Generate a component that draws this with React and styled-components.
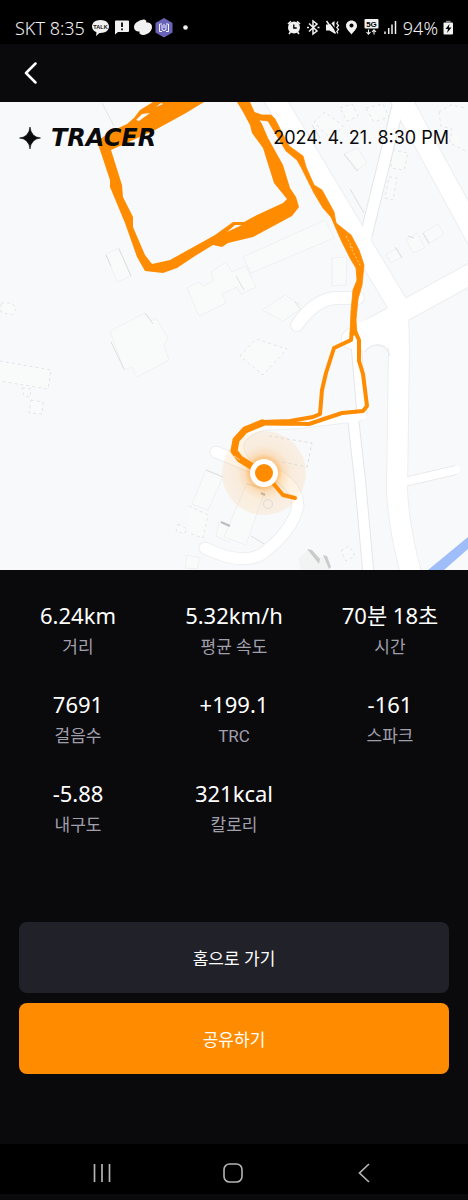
import React from "react";
import styled, { createGlobalStyle } from "styled-components";

const stats = [
  { value: "6.24km", label: "거리" },
  { value: "5.32km/h", label: "평균 속도" },
  { value: "70분 18초", label: "시간" },
  { value: "7691", label: "걸음수" },
  { value: "+199.1", label: "TRC" },
  { value: "-161", label: "스파크" },
  { value: "-5.88", label: "내구도" },
  { value: "321kcal", label: "칼로리" },
];

// w is the road width, the edge line is drawn underneath
const roads = [
  { d: "M268 88 L398 305 L399 350 L397 490 Q399 532 413 580", w: 20 },
  { d: "M400 98 L366 236", w: 11, dashed: true },
  { d: "M396 90 L476 237", w: 20 },
  { d: "M480 269 L400 313 L352 339", w: 20 },
  { d: "M355 332 L362 415", w: 9, dashed: true },
  { d: "M353 418 L360 480 L369 580", w: 10, dashed: true },
  { d: "M400 483 L456 470", w: 8, dashed: true },
  { d: "M358 298 H335 Q314 300 297 325", w: 12 },
  { d: "M358 417 L300 424 L262 426 Q240 434 239 446 Q240 462 262 473", w: 8 },
  { d: "M216 452 L250 466 Q297 476 298 506 Q292 532 262 554 Q242 566 205 548", w: 11 },
];

const buildings = [
  "M106 254 L119 248 L131 276 L117 282 Z",
  "M187 288 L199 282 L203 286 L214 281 L211 272 L226 262 L232 272 L246 266 L256 287 L241 294 L237 287 L222 294 L226 303 L199 316 Z",
  "M110 331 L145 313 L151 321 L156 318 L168 338 L164 345 L169 360 L137 377 L132 367 L124 370 Z",
  "M243 257 L325 220 L334 238 L251 273 Z",
  "M332 258 L347 257 L346 285 L332 286 Z",
  "M262 310 L285 295 L304 307 L283 321 Z",
  "M344 154 L358 148 L367 163 L356 171 Z",
  "M386 255 L397 248 L402 257 L391 263 Z",
  "M406 240 L417 233 L425 248 L413 253 Z",
  "M423 233 L438 224 L444 234 L430 243 Z",
  "M206 470 L223 477 L208 510 L192 504 Z",
  "M219 522 L233 529 L229 542 L216 536 Z",
  "M247 483 L265 490 L246 545 L224 537 Z",
  "M187 555 L200 558 L197 569 L185 568 Z",
];

const dashedBuildings = [
  "M0 361 L51 370 L48 389 L0 381",
  "M22 388 L31 389 L30 397 L24 396 Z",
  "M31 400 L43 402 L42 414 L29 413 Z",
  "M1 303 L12 303 L16 309 L12 315 L1 312 Z",
  "M189 506 L208 515 L203 538 L189 533 M178 524 L187 529 L184 534 L176 531 Z",
  "M240 356 L256 339 L287 349 L263 375 Z",
  "M314 122 L325 112 L343 126 L331 139 Z",
  "M340 108 L352 104 L358 116 L347 121 Z",
  "M366 108 L383 104 L389 117 L374 122 Z",
  "M392 150 L408 153 L404 170 L391 168 Z",
  "M389 177 L397 178 L393 200 L385 198 Z",
  "M439 112 L451 105 L466 108 M439 112 L441 126 L452 129 L450 143 L466 151",
  "M341 551 L349 546 L355 556 L346 561 Z",
];

const App = () => {
  return (
    <>
      <GlobalStyle />
      <Screen>
        <StatusBar>
          <StatusGroup>
            <StatusText>SKT 8:35</StatusText>
            <NotificationIcons />
          </StatusGroup>
          <StatusGroup>
            <DeviceIcons />
            <StatusText>94%</StatusText>
            <BatteryIcon />
          </StatusGroup>
        </StatusBar>

        <Header>
          <BackButton type="button" aria-label="뒤로">
            <svg width="14" height="22" viewBox="0 0 14 22">
              <path d="M11.5 1.5 L2 11 L11.5 20.5" fill="none" stroke="#fff" strokeWidth="2.5" strokeLinecap="round" strokeLinejoin="round" />
            </svg>
          </BackButton>
        </Header>

        <main>
          <MapArea>
            <RouteMap />
            <MapCaption>
              <Brand>
                <svg width="22" height="24" viewBox="0 0 22 24">
                  <path d="M11 1 Q12 11 21.5 12 Q12 13 11 23 Q10 13 .5 12 Q10 11 11 1 Z" fill="#0a0a0c" stroke="#0a0a0c" strokeWidth="0.6" />
                </svg>
                <BrandName>TRACER</BrandName>
              </Brand>
              <RecordedAt>2024. 4. 21. 8:30 PM</RecordedAt>
            </MapCaption>
          </MapArea>

          <StatList>
            {stats.map((stat) => (
              <Stat key={stat.label}>
                <StatLabel>{stat.label}</StatLabel>
                <StatValue>{stat.value}</StatValue>
              </Stat>
            ))}
          </StatList>
        </main>

        <Actions>
          <ActionButton type="button">홈으로 가기</ActionButton>
          <ActionButton type="button" $primary>
            공유하기
          </ActionButton>
        </Actions>

        <SystemNav aria-label="시스템">
          <NavButton type="button" aria-label="최근 앱">
            <svg width="20" height="20" viewBox="0 0 20 20">
              <path d="M2.5 1 V19 M10 1 V19 M17.5 1 V19" stroke="#b4b4b4" strokeWidth="1.7" />
            </svg>
          </NavButton>
          <NavButton type="button" aria-label="홈">
            <svg width="20" height="20" viewBox="0 0 20 20">
              <rect x="1" y="1" width="18" height="18" rx="5.5" fill="none" stroke="#b4b4b4" strokeWidth="1.6" />
            </svg>
          </NavButton>
          <NavButton type="button" aria-label="뒤로 가기">
            <svg width="20" height="20" viewBox="0 0 20 20">
              <path d="M15 1 L5.5 10 L15 19" fill="none" stroke="#b4b4b4" strokeWidth="1.7" />
            </svg>
          </NavButton>
        </SystemNav>
      </Screen>
    </>
  );
};

export default App;

const NotificationIcons = () => (
  <svg width="98" height="22" viewBox="90 17 98 22" aria-hidden="true">
    <path d="M100.500 20 C105.500 20 109 22.800 109 26.500 C109 30.200 105.500 33 100.500 33 L99.500 33 L96 36 L96.500 32.300 C93.800 31.200 92 29 92 26.500 C92 22.800 95.500 20 100.500 20 Z" fill="#f2f2f2" />
    <text x="100.500" y="28.500" textAnchor="middle" fontFamily="Liberation Sans" fontSize="5.5" fontWeight="700" fill="#111">
      TALK
    </text>
    <path d="M116 20.500 H128 Q129 20.500 129 21.500 V31 Q129 32 128 32 H118 L115 34.500 V21.500 Q115 20.500 116 20.500 Z" fill="#f2f2f2" />
    <path d="M122 22.500 V27 M122 28.500 V30.300" stroke="#000" strokeWidth="1.800" />
    <path d="M143.500 19.500 C138 20.500 134 23.500 134 27 C134 29.500 135.500 31 138 31.500 L139.500 31.500 L139.500 33.500 Q142 35.500 144 35 C149 34 152 30.500 152 27 C152 24.500 150.500 23 148 22.500 L146.500 22.500 L146 20.500 Q145 19.300 143.500 19.500 Z" fill="#f2f2f2" />
    <path d="M164 18 L172.500 23 V32.500 L164 37.500 L155.500 32.500 V23 Z" fill="#6a64b8" />
    <path d="M162 24 H159.500 V31.500 H162 M166 24 H168.500 V31.500 H166 M162 25 V29 Q162 30.500 164 30.500 Q166 30.500 166 29 V25 M164 24 V28" stroke="#f4f2ff" strokeWidth="1" fill="none" />
    <circle cx="185.500" cy="27.500" r="2.300" fill="#f2f2f2" />
  </svg>
);

const DeviceIcons = () => (
  <svg width="112" height="22" viewBox="288 17 112 22" aria-hidden="true">
    {/* alarm */}
    <circle cx="296" cy="27.500" r="6" fill="#f2f2f2" />
    <path d="M290 24 L293 21.300 M302 24 L299 21.300 M292.500 32 L291 34 M299.500 32 L301 34" stroke="#f2f2f2" strokeWidth="1.600" />
    <path d="M295.800 24.500 V28 H298.700" stroke="#000" strokeWidth="1.300" fill="none" />
    {/* bluetooth */}
    <path d="M311 23.500 L319 31 L315 34 V21 L319 24 L311 31.500 M309 27.500 H311 M319.500 27.500 H321.500" stroke="#f2f2f2" strokeWidth="1.500" fill="none" />
    {/* muted, vibrating */}
    <path d="M328 24.500 H331.500 L336.500 21 V33.500 L331.500 30.500 H328 Z" fill="#f2f2f2" />
    <path d="M330.500 20.500 L339 32" stroke="#000" strokeWidth="1.300" />
    <path d="M328.500 21 L337.500 33.500" stroke="#f2f2f2" strokeWidth="1.400" />
    <path d="M340 21.500 L338.800 23.500 L340.500 25.500 L338.800 27.500 L340.500 29.500 L338.800 31.500 L340 33.500" stroke="#f2f2f2" strokeWidth="1.200" fill="none" />
    {/* location */}
    <path d="M353.500 20.500 C356.800 20.500 359 23 359 25.800 C359 29 355.800 31.500 353.500 34.500 C351.200 31.500 348 29 348 25.800 C348 23 350.200 20.500 353.500 20.500 Z" fill="#f2f2f2" />
    <circle cx="353.500" cy="25.500" r="2" fill="#000" />
    {/* 5G */}
    <rect x="366.500" y="19" width="14" height="9.500" rx="1" fill="#f2f2f2" />
    <text x="373.500" y="26.700" textAnchor="middle" fontFamily="Liberation Sans" fontSize="8" fontWeight="700" fill="#000">
      5G
    </text>
    <path d="M370.500 29.500 V34 M368.500 32 L370.500 34.200 L372.500 32 M376 34.500 V30 M374 32 L376 29.800 L378 32" stroke="#f2f2f2" strokeWidth="1.100" fill="none" />
    {/* signal */}
    <path d="M387 31.500 V34 M390.700 28 V34 M394 24.500 V34 M397.500 21 V34" stroke="#f2f2f2" strokeWidth="1.500" />
  </svg>
);

const BatteryIcon = () => (
  <svg width="11" height="22" viewBox="443 17 11 22" aria-hidden="true">
    <path d="M446 21.500 H450.500" stroke="#8a8a8a" strokeWidth="1.500" />
    <rect x="443.500" y="22.500" width="9.500" height="12" rx="1" fill="#f2f2f2" />
    <path d="M449.500 24 L445.500 29 H448 L447 33 L451.500 27.500 H448.800 Z" fill="#000" />
  </svg>
);

const RouteMap = () => (
  <MapSvg viewBox="0 102 468 468" role="img" aria-label="이동 경로 지도">
    <defs>
      <radialGradient id="halo">
        <stop offset="0.3" stopColor="#ff8c00" stopOpacity="0.6" />
        <stop offset="0.45" stopColor="#ff8c00" stopOpacity="0.25" />
        <stop offset="0.65" stopColor="#ff8c00" stopOpacity="0.12" />
        <stop offset="1" stopColor="#ff8c00" stopOpacity="0.09" />
      </radialGradient>
    </defs>
    <rect y="102" width="468" height="468" fill="#f8f9fb" />

    <g fill="#f9fbfb" stroke="#eceeef" strokeWidth="0.8">
      {buildings.map((d) => (
        <path key={d} d={d} />
      ))}
      <path d="M102 103 L114 126" stroke="#dddfe0" />
    </g>
    <g fill="#f9fbfb" stroke="#dddfe1" strokeWidth="0.8" strokeDasharray="3 3">
      {dashedBuildings.map((d) => (
        <path key={d} d={d} />
      ))}
    </g>
    <path
      d="M106 255 L111 266 M119 249 L131 276 M145 313 L153 324 M111 342 L124 369 M206 470 L223 477 M312 125 L320 138 M344 154 L358 171 M350 189 L364 213 M414 238 L408 236 M423 233 L429 244 M395 247 L402 258 M251 536 L266 545 M247 484 L260 488 M236 276 L244 290 M295 302 L303 312"
      fill="none"
      stroke="#d6d8d9"
      strokeWidth="0.8"
    />
    <path d="M221 522 L230 526 M261 493 L265 495" stroke="#bbbdbf" strokeWidth="2" />
    <path d="M299 558 L309 549 L318 558 L325 556 L330 570 H300 Z" fill="#f2f3f3" />
    <path d="M307 549 L312 550 L320 559 L319 564 Z M323 555 L327 556 L331 567 L329 569 Z" fill="#c9cccb" />

    <g fill="none" strokeLinecap="round" strokeLinejoin="round">
      {roads.map((road) => (
        <path key={road.d} d={road.d} stroke={road.dashed ? "#e4e6e8" : "#eceef0"} strokeWidth={road.w + 2} strokeLinecap={road.dashed ? "butt" : "round"} />
      ))}
      {roads.map((road) => (
        <path key={road.d} d={road.d} stroke="#fff" strokeWidth={road.w} />
      ))}
    </g>
    <path d="M350 326 L390 310 L408 330 V350 H390 Q387 344 378 344 Q369 345 365 351 L350 345 Z" fill="#fff" />
    <path d="M365 352 Q369 345 378 345 Q387 346 390 356" fill="none" stroke="#e4e6e8" />
    <path d="M428 570 L468 537 V549 L444 570 Z" fill="#9fbdf8" />

    <circle cx="264" cy="473" r="42" fill="url(#halo)" />
    <g fill="none" stroke="#d8d5d2" strokeWidth="0.8">
      <path d="M269 436 L312 443 L307 467 L267 459" strokeDasharray="3 3" />
      <circle cx="268" cy="504" r="4.5" />
    </g>

    <path
      fill="#ff8c00"
      fillRule="evenodd"
      d="M153 102 L140 110 L134 118 L127 124 L110 132 L99 140 L99 147 L110 180 L110 187 L125 223 L137 257 L145 271 L163 273 L177 268 L195 256 L213 245 L222 247 L228 243 L253 237 L292 216 L299 207 L296 197 L290 188 L283 165 L268 138 L262 124 L255 113 L250 102 L237 102 L243 112 L250 125 L252 133 L263 148 L274 183 L287 199 L283 203 L257 215 L244 222 L233 222 L215 235 L197 245 L170 260 L152 264 L145 255 L133 227 L133 217 L123 197 L122 185 L111 150 L155 130 L186 113 L204 102 Z
      M136 120 L142 114 L150 113 L139 121 Z M156 107 L161 103 L163 104 Z M227 232 L235 225 L242 225 L229 231 Z"
    />
    <path
      fill="#ff8c00"
      stroke="#ff8c00"
      strokeWidth="0.8"
      strokeLinejoin="round"
      d="M253 112 L262 115 L271 115 L275 119 L282 133 L289 146 L303 156 L306 167 L314 185 L322 190 L334 212 L336 223 L351 235 L359 250 L364 265 L362 285 L358 299 L356 320 L357 335 L350 335 L351 311 L353 290 L357 280 L356 268 L350 258 L341 240 L331 217 L323 208 L314 193 L301 167 L297 160 L286 151 L268 121 L253 119 Z"
    />
    <path d="M346 236 L353 249 M350 246 L361 267" stroke="#ffe0b8" strokeWidth="0.8" strokeDasharray="2 2" />
    <g fill="none" stroke="#ff8c00" strokeWidth="4" strokeLinecap="round" strokeLinejoin="round">
      <path d="M352 330 L351 340 L334 348 L326 373 L322 390 L320 414 L313 417 L290 421 L262 422" />
      <path d="M355 331 L359 340 L359 361 L363 374 L367 406 L363 411 L342 413 L309 424 L262 423" />
      <path d="M262 423 L245 430 L236 440 L234 451 L240 459 L256 469" strokeWidth="7" />
      <path d="M262 423 L293 423" strokeWidth="5" />
      <path d="M272 482 L283 495 L295 498" />
    </g>
    <path d="M234 456 L240 460" stroke="#ffe0b8" strokeWidth="0.8" />
    <circle cx="264" cy="473" r="11.5" fill="#ff8c00" stroke="#fff" strokeWidth="5" />
  </MapSvg>
);

const GlobalStyle = createGlobalStyle`
  * {
    box-sizing: border-box;
  }

  body {
    margin: 0;
    background: #0a0a0c;
    font-family: "Noto Sans", "Noto Sans CJK KR", sans-serif;
  }
`;

const Screen = styled.div`
  min-height: 100vh;
  display: flex;
  flex-direction: column;
  padding-bottom: 6px;
  background: #0a0a0c;
  color: #fff;
`;

const StatusBar = styled.div`
  height: 44px;
  display: flex;
  align-items: center;
  justify-content: space-between;
  padding: 12px 14px 0 15px;
  background: #000;
`;

const StatusGroup = styled.div`
  display: flex;
  align-items: center;
  gap: 5px;
`;

const StatusText = styled.span`
  color: #f2f2f2;
  font-size: 18px;
  font-weight: 300;
  line-height: 24px;
`;

const Header = styled.header`
  height: 58px;
  display: flex;
  align-items: center;
  padding: 0 16px;
`;

const BackButton = styled.button`
  display: flex;
  padding: 8px;
  border: 0;
  background: none;
  cursor: pointer;
`;

const MapArea = styled.section`
  position: relative;
`;

const MapSvg = styled.svg`
  display: block;
  width: 100%;
`;

const MapCaption = styled.div`
  position: absolute;
  top: 0;
  left: 0;
  right: 0;
  display: flex;
  align-items: center;
  justify-content: space-between;
  padding: 24px 19px 0;
  color: #0a0a0c;
`;

const Brand = styled.div`
  display: flex;
  align-items: center;
  gap: 10px;
`;

const BrandName = styled.span`
  font-family: "DejaVu Sans", sans-serif;
  font-size: 24px;
  font-style: italic;
  font-weight: 700;
  line-height: 24px;
`;

const RecordedAt = styled.time`
  font-family: Inter, sans-serif;
  font-size: 18px;
  line-height: 24px;
`;

const StatList = styled.dl`
  display: grid;
  grid-template-columns: repeat(3, 1fr);
  row-gap: 25px;
  margin: 0;
  padding: 30px 0 40px;
  text-align: center;
`;

const Stat = styled.div`
  display: flex;
  flex-direction: column-reverse;
`;

const StatValue = styled.dd`
  margin: 0;
  font-size: 22px;
  line-height: 30px;
`;

const StatLabel = styled.dt`
  color: #a09fac;
  font-family: Roboto, "Noto Sans CJK KR", sans-serif;
  font-size: 17px;
  line-height: 34px;
`;

const Actions = styled.div`
  display: flex;
  flex-direction: column;
  gap: 10px;
  margin-top: auto;
  padding: 0 19px 70px;
`;

const ActionButton = styled.button`
  height: 71px;
  border: 0;
  border-radius: 8px;
  background: ${({ $primary }) => ($primary ? "#ff8c00" : "#212129")};
  color: #fff;
  font-family: inherit;
  font-size: 17px;
  cursor: pointer;
`;

const SystemNav = styled.nav`
  height: 50px;
  display: flex;
  align-items: center;
  justify-content: center;
  gap: 95px;
  padding: 8px 3px 0 0;
  background: #000;
`;

const NavButton = styled.button`
  display: flex;
  padding: 8px;
  border: 0;
  background: none;
  cursor: pointer;
`;
